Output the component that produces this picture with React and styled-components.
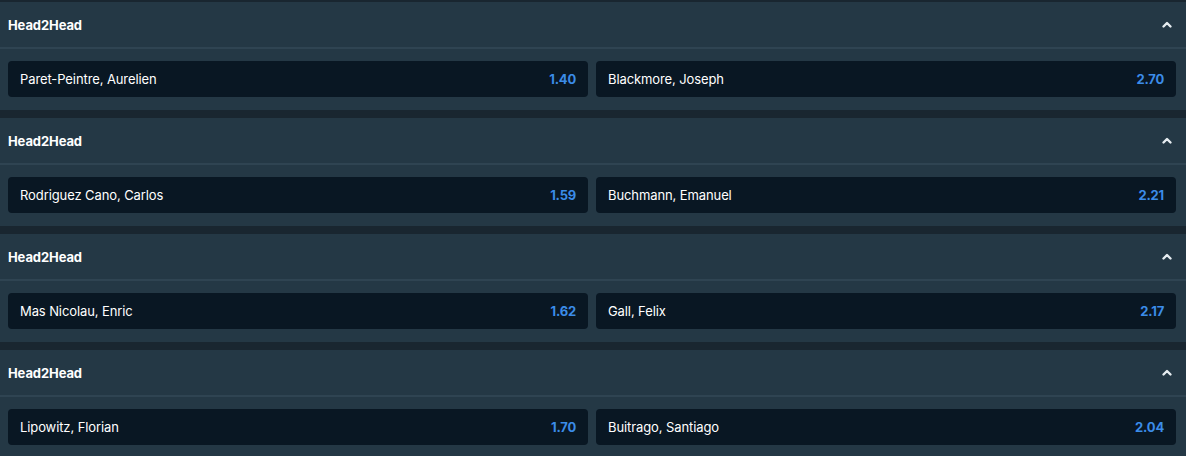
import React from "react";
import styled, { createGlobalStyle } from "styled-components";

const GlobalStyle = createGlobalStyle`
  html, body {
    margin: 0;
    padding: 0;
    background: #192630;
  }
  body {
    font-family: "Inter", "Roboto", "Liberation Sans", sans-serif;
  }
`;

const Page = styled.div`
  padding-top: 2px;
  width: 1186px;
`;

const Market = styled.section`
  background: #243845;
  margin-bottom: 8px;
`;

const MarketHeader = styled.div`
  height: 45px;
  display: flex;
  align-items: center;
  justify-content: space-between;
  padding: 0 13px 0 8px;
  border-bottom: 2px solid #2f4452;
`;

const MarketTitle = styled.span`
  color: #ffffff;
  font-size: 13px;
  font-weight: 700;
  letter-spacing: -0.1px;
`;

const Chevron = styled.svg`
  width: 12px;
  height: 12px;
  margin-top: 1px;
`;

const Selections = styled.div`
  display: grid;
  grid-template-columns: 1fr 1fr;
  gap: 8px;
  padding: 12px 10px 13px 8px;
`;

const Selection = styled.button`
  height: 36px;
  display: flex;
  align-items: center;
  justify-content: space-between;
  padding: 0 12px;
  background: #091723;
  border: 0;
  border-radius: 4px;
  font-family: inherit;
  cursor: pointer;
  &:hover {
    background: #0e2030;
  }
`;

const Name = styled.span`
  color: #ffffff;
  font-size: 13px;
  letter-spacing: -0.1px;
`;

const Odds = styled.span`
  color: #3b8ce8;
  font-size: 13px;
  font-weight: 700;
  letter-spacing: -0.2px;
`;

const markets = [
  [
    ["Paret-Peintre, Aurelien", "1.40"],
    ["Blackmore, Joseph", "2.70"],
  ],
  [
    ["Rodriguez Cano, Carlos", "1.59"],
    ["Buchmann, Emanuel", "2.21"],
  ],
  [
    ["Mas Nicolau, Enric", "1.62"],
    ["Gall, Felix", "2.17"],
  ],
  [
    ["Lipowitz, Florian", "1.70"],
    ["Buitrago, Santiago", "2.04"],
  ],
];

const App = () => {
  return (
    <>
      <GlobalStyle />
      <Page>
        {markets.map((pair, i) => (
          <Market key={i}>
            <MarketHeader>
              <MarketTitle>Head2Head</MarketTitle>
              <Chevron viewBox="0 0 12 12">
                <path
                  d="M2.5 7.5 L6 4 L9.5 7.5"
                  fill="none"
                  stroke="#e6ecf0"
                  strokeWidth="2.4"
                  strokeLinecap="round"
                  strokeLinejoin="round"
                />
              </Chevron>
            </MarketHeader>
            <Selections>
              {pair.map(([name, odds]) => (
                <Selection key={name}>
                  <Name>{name}</Name>
                  <Odds>{odds}</Odds>
                </Selection>
              ))}
            </Selections>
          </Market>
        ))}
      </Page>
    </>
  );
};

export default App;
